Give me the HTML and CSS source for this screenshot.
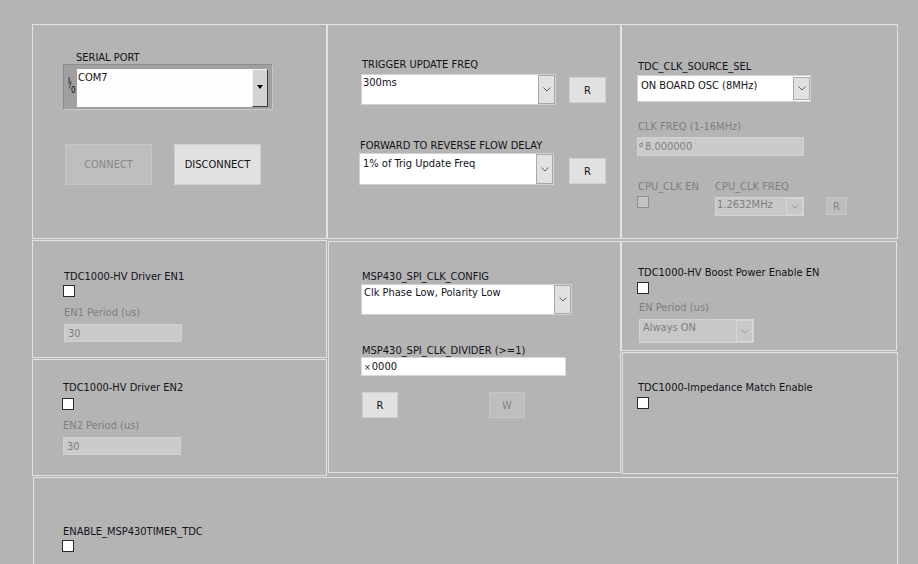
FILE: index.html
```html
<!DOCTYPE html>
<html lang="en">
<head>
<meta charset="utf-8">
<title>TDC1000 Control Panel</title>
<link rel="stylesheet" href="styles.css">
</head>
<body>
<main class="page">
  <div class="row row-top">
    <section class="panel p-serial">
      <div class="lbl l-serial">SERIAL PORT</div>
      <div class="visa">
        <div class="io"><span class="io-i">I</span><span class="io-s">/</span><span class="io-o">0</span></div>
        <div class="visa-field">COM7</div>
        <div class="visa-btn"><span class="tri"></span></div>
      </div>
      <div class="serial-btns">
        <div class="btn btn-lg is-dis">CONNECT</div>
        <div class="btn btn-lg">DISCONNECT</div>
      </div>
    </section>

    <section class="panel p-freq">
      <div class="lbl l-trig">TRIGGER UPDATE FREQ</div>
      <div class="ctl-row r-trig">
        <div class="combo c-trig">
          <span class="combo-text">300ms</span>
          <span class="combo-btn"><svg class="chev" width="8" height="5" viewBox="0 0 8 5"><polyline points="0.5,0.5 4,4 7.5,0.5" fill="none" stroke="#5f5f5f" stroke-width="1"/></svg></span>
        </div>
        <div class="btn b-r b-trig">R</div>
      </div>
      <div class="lbl l-fwd">FORWARD TO REVERSE FLOW DELAY</div>
      <div class="ctl-row r-fwd">
        <div class="combo c-fwd">
          <span class="combo-text">1% of Trig Update Freq</span>
          <span class="combo-btn"><svg class="chev" width="8" height="5" viewBox="0 0 8 5"><polyline points="0.5,0.5 4,4 7.5,0.5" fill="none" stroke="#5f5f5f" stroke-width="1"/></svg></span>
        </div>
        <div class="btn b-r b-fwd">R</div>
      </div>
    </section>

    <section class="panel p-clk">
      <div class="lbl l-src">TDC_CLK_SOURCE_SEL</div>
      <div class="combo c-src">
        <span class="combo-text">ON BOARD OSC (8MHz)</span>
        <span class="combo-btn"><svg class="chev" width="8" height="5" viewBox="0 0 8 5"><polyline points="0.5,0.5 4,4 7.5,0.5" fill="none" stroke="#5f5f5f" stroke-width="1"/></svg></span>
      </div>
      <div class="lbl dis l-clkf">CLK FREQ (1-16MHz)</div>
      <div class="field is-dis f-clkf"><span class="radix-d">d</span>8.000000</div>
      <div class="cpu-row">
        <div class="cpu-en">
          <div class="lbl dis">CPU_CLK EN</div>
          <div class="chk is-dis"></div>
        </div>
        <div class="cpu-freq">
          <div class="lbl dis">CPU_CLK FREQ</div>
          <div class="combo is-dis c-cpu">
            <span class="combo-text">1.2632MHz</span>
            <span class="combo-btn"><svg class="chev" width="8" height="5" viewBox="0 0 8 5"><polyline points="0.5,0.5 4,4 7.5,0.5" fill="none" stroke="#9c9c9c" stroke-width="1"/></svg></span>
          </div>
        </div>
        <div class="btn is-dis b-cpu">R</div>
      </div>
    </section>
  </div>

  <div class="row row-mid">
    <div class="col col-left">
      <section class="panel p-en1">
        <div class="lbl l-en1">TDC1000-HV Driver EN1</div>
        <div class="chk c-en1"></div>
        <div class="lbl dis l-en1p">EN1 Period (us)</div>
        <div class="field is-dis f-en1">30</div>
      </section>
      <section class="panel p-en2">
        <div class="lbl l-en2">TDC1000-HV Driver EN2</div>
        <div class="chk c-en2"></div>
        <div class="lbl dis l-en2p">EN2 Period (us)</div>
        <div class="field is-dis f-en2">30</div>
      </section>
    </div>

    <section class="panel p-spi">
      <div class="lbl l-spi">MSP430_SPI_CLK_CONFIG</div>
      <div class="combo c-spi">
        <span class="combo-text">Clk Phase Low, Polarity Low</span>
        <span class="combo-btn"><svg class="chev" width="8" height="5" viewBox="0 0 8 5"><polyline points="0.5,0.5 4,4 7.5,0.5" fill="none" stroke="#5f5f5f" stroke-width="1"/></svg></span>
      </div>
      <div class="lbl l-div">MSP430_SPI_CLK_DIVIDER (&gt;=1)</div>
      <div class="field f-div"><span class="radix-x">×</span>0000</div>
      <div class="spi-btns">
        <div class="btn b-spi">R</div>
        <div class="btn is-dis b-spi">W</div>
      </div>
    </section>

    <div class="col col-right">
      <section class="panel p-boost">
        <div class="lbl l-boost">TDC1000-HV Boost Power Enable EN</div>
        <div class="chk c-boost"></div>
        <div class="lbl dis l-boostp">EN Period (us)</div>
        <div class="combo is-dis c-boost">
          <span class="combo-text">Always ON</span>
          <span class="combo-btn"><svg class="chev" width="8" height="5" viewBox="0 0 8 5"><polyline points="0.5,0.5 4,4 7.5,0.5" fill="none" stroke="#9c9c9c" stroke-width="1"/></svg></span>
        </div>
      </section>
      <section class="panel p-imp">
        <div class="lbl l-imp">TDC1000-Impedance Match Enable</div>
        <div class="chk c-imp"></div>
      </section>
    </div>
  </div>

  <div class="row row-bottom">
    <section class="panel p-timer">
      <div class="lbl l-timer">ENABLE_MSP430TIMER_TDC</div>
      <div class="chk c-timer"></div>
    </section>
  </div>
</main>
</body>
</html>
```
FILE: styles.css
```css
* { box-sizing: border-box; }

html, body {
  margin: 0;
  padding: 0;
  width: 918px;
  height: 564px;
  overflow: hidden;
  background: #b4b4b4;
}

body {
  font-family: "DejaVu Sans Condensed", "DejaVu Sans", "Liberation Sans", sans-serif;
  font-stretch: condensed;
  font-size: 11px;
  line-height: 13px;
  color: #121218;
}

.page {
  padding: 24px 0 0 32px;
}

.row { display: flex; align-items: flex-start; }
.col { display: flex; flex-direction: column; }
.ctl-row { display: flex; align-items: flex-start; }

.panel {
  border: 1px solid #e2e2e2;
  flex: none;
}

.lbl {
  height: 13px;
  white-space: nowrap;
}
.lbl.dis { color: #7e7e7e; }

/* generic controls */
.btn {
  display: flex;
  align-items: center;
  justify-content: center;
  background: #e1e1e1;
  border: 1px solid #d0d0d0;
  color: #111;
  flex: none;
}
.btn.is-dis {
  background: #bebebe;
  border-color: #c6c6c6;
  color: #868686;
}

.combo {
  display: flex;
  background: #ffffff;
  border: 1px solid #d2d2d2;
  flex: none;
}
.combo-text {
  flex: 1;
  padding: 2px 0 0 3px;
  white-space: nowrap;
  overflow: hidden;
}
.combo-btn {
  width: 17px;
  flex: none;
  background: #e1e1e1;
  border: 1px solid #a9a9a9;
  display: flex;
  align-items: center;
  justify-content: center;
}
.combo.is-dis {
  background: #c8c8c8;
  border-color: #d3d3d3;
  color: #7e7e7e;
}
.combo.is-dis .combo-btn {
  background: #c8c8c8;
  border-color: #d6d6d6;
}

.field {
  display: flex;
  align-items: flex-start;
  background: #ffffff;
  border: 1px solid #d8d8d8;
  padding: 2px 0 0 3px;
  white-space: nowrap;
}
.field.is-dis {
  background: #cbcbcb;
  border-color: #d2d2d2;
  color: #7e7e7e;
}

.chk {
  width: 12px;
  height: 12px;
  background: #ffffff;
  border: 1px solid #2a2a2a;
}
.chk.is-dis {
  background: #c3c3c3;
  border-color: #8e8e8e;
}

.radix-d {
  font-size: 7px;
  line-height: 9px;
  margin: 1px 2px 0 -1px;
  color: #6e6e6e;
}
.radix-x {
  font-size: 9px;
  line-height: 13px;
  margin: 1px 1px 0 0;
}

/* ---------- top row ---------- */
.p-serial { width: 295px; height: 215px; padding-top: 26px; }
.l-serial { margin-left: 43px; }
.visa {
  margin-left: 30px;
  width: 210px;
  height: 46px;
  display: flex;
  background: #a0a0a0;
  border: 1px solid #c8c8c8;
  border-top-color: #8c8c8c;
  border-left-color: #8c8c8c;
  padding: 4px 4px 2px 3px;
}
.io {
  width: 10px;
  flex: none;
  position: relative;
  font-size: 8px;
  line-height: 8px;
  color: #000;
}
.io-i { position: absolute; left: 1px; top: 9px; }
.io-s { position: absolute; left: 2px; top: 13px; }
.io-o { position: absolute; left: 4px; top: 18px; }
.visa-field {
  flex: 1;
  background: #fdfdfd;
  padding: 2px 0 0 1px;
}
.visa-btn {
  width: 16px;
  flex: none;
  background: #d4d4d4;
  border-top: 1px solid #f2f2f2;
  border-left: 1px solid #f2f2f2;
  border-right: 1px solid #3a3a3a;
  border-bottom: 1px solid #3a3a3a;
  display: flex;
  align-items: center;
  justify-content: center;
}
.tri {
  width: 0;
  height: 0;
  margin-top: -3px;
  border-left: 3.5px solid transparent;
  border-right: 3.5px solid transparent;
  border-top: 4px solid #000;
}
.serial-btns {
  display: flex;
  gap: 22px;
  margin: 34px 0 0 32px;
}
.btn-lg { width: 87px; height: 41px; }

.p-freq { width: 294px; height: 215px; padding-top: 33px; }
.l-trig { margin-left: 34px; }
.r-trig { margin: 3px 0 0 33px; }
.c-trig { width: 195px; height: 31px; }
.c-trig .combo-text { padding: 1px 0 0 1px; }
.b-trig { margin: 3px 0 0 13px; width: 37px; height: 26px; }
.l-fwd { margin: 34px 0 0 32px; }
.r-fwd { margin: 1px 0 0 31px; }
.c-fwd { width: 195px; height: 32px; }
.c-fwd .combo-text { padding: 3px 0 0 3px; }
.b-fwd { margin: 5px 0 0 15px; width: 37px; height: 26px; }

.p-clk { width: 277px; height: 215px; padding-top: 35px; }
.l-src { margin-left: 16px; }
.c-src { margin: 2px 0 0 15px; width: 174px; height: 27px; }
.c-src .combo-text { padding: 3px 0 0 3px; }
.c-src .combo-btn { margin: 1px 0; }
.l-clkf { margin: 18px 0 0 16px; }
.f-clkf { margin: 4px 0 0 15px; width: 167px; height: 19px; padding-left: 2px; }
.cpu-row { display: flex; align-items: flex-start; margin: 24px 0 0 16px; }
.cpu-en { width: 77px; flex: none; }
.cpu-en .chk { margin: 3px 0 0 -1px; }
.c-cpu { margin-top: 4px; width: 89px; height: 19px; }
.c-cpu .combo-text { padding: 0 0 0 1px; }
.b-cpu { margin: 17px 0 0 22px; width: 21px; height: 18px; }

/* ---------- middle row ---------- */
.row-mid { margin-top: 1px; }

.p-en1 { width: 295px; height: 118px; padding-top: 29px; }
.l-en1 { margin-left: 31px; }
.c-en1 { margin: 2px 0 0 30px; }
.l-en1p { margin: 9px 0 0 31px; }
.f-en1 { margin: 5px 0 0 31px; width: 118px; height: 18px; }

.p-en2 { width: 295px; height: 117px; margin-top: 1px; padding-top: 21px; }
.l-en2 { margin-left: 30px; }
.c-en2 { margin: 4px 0 0 29px; }
.l-en2p { margin: 9px 0 0 30px; }
.f-en2 { margin: 5px 0 0 30px; width: 118px; height: 18px; }

.p-spi { width: 293px; height: 232px; margin: 1px 0 0 1px; padding-top: 28px; }
.l-spi { margin-left: 33px; }
.c-spi { margin: 1px 0 0 32px; width: 211px; height: 31px; }
.c-spi .combo-text { padding: 1px 0 0 2px; }
.l-div { margin: 29px 0 0 33px; }
.f-div { margin: 0 0 0 32px; width: 205px; height: 19px; padding: 2px 0 0 2px; }
.spi-btns { display: flex; gap: 91px; margin: 16px 0 0 33px; }
.b-spi { width: 36px; height: 26px; }

.col-right { margin-top: 1px; }
.p-boost { width: 276px; height: 110px; padding-top: 24px; }
.l-boost { margin-left: 16px; }
.c-boost { margin: 3px 0 0 15px; }
.l-boostp { margin: 7px 0 0 17px; }
.combo.c-boost { margin: 5px 0 0 17px; width: 115px; height: 24px; }
.combo.c-boost .combo-text { padding: 1px 0 0 3px; }

.p-imp { width: 276px; height: 122px; margin: 1px 0 0 1px; padding-top: 28px; }
.l-imp { margin-left: 15px; }
.c-imp { margin: 3px 0 0 14px; }

/* ---------- bottom row ---------- */
.row-bottom { margin-top: 1px; }
.p-timer { width: 865px; height: 100px; margin-left: 1px; padding-top: 47px; }
.l-timer { margin-left: 29px; }
.c-timer { margin: 2px 0 0 28px; }
```
